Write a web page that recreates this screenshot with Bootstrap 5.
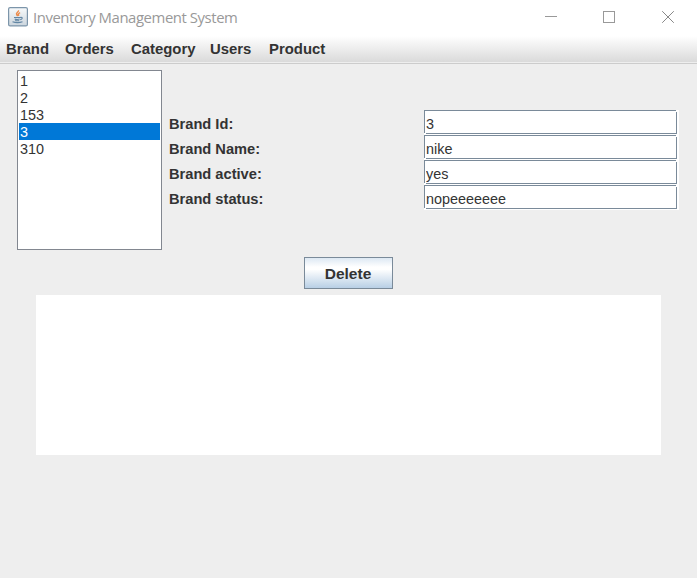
<!DOCTYPE html>
<html lang="en">
<head>
<meta charset="utf-8">
<meta name="viewport" content="width=device-width, initial-scale=1">
<title>Inventory Management System</title>
<link href="https://cdn.jsdelivr.net/npm/bootstrap@5.3.0/dist/css/bootstrap.min.css" rel="stylesheet">
<style>
body{background:#eee;color:#333;font:14.65px/17px "Liberation Sans",Arial,sans-serif;height:578px;overflow:hidden}
.titlebar{height:36px;padding:0 0 2px 8px;background:#fff;color:#999}
.app-title{font:14.9px/20px "Open Sans","Noto Sans",sans-serif;margin-left:5px;letter-spacing:-.43px;white-space:nowrap}
.window-tools{padding-right:23px;gap:47px}
.window-tools svg:first-child{margin-right:-1px}
.menubar{height:28px;padding:0 0 1px 6px;background:linear-gradient(#fff,#dadada 26px,#eee 26px,#eee 27px,#ccc 27px);font-weight:700}
.menubar .nav-link{color:#333;font-size:14.9px;font-weight:700;padding:0;white-space:nowrap}
.m1{width:59px}.m2{width:66px}.m3{width:79px}.m4{width:59px}
.editor{padding:6px 18px 0 17px}
.brand-list{width:145px;height:180px;border:1px solid #828790;background:#fff;padding:1px;font-size:14.4px}
.brand-list .list-group-item{border:0;padding:0 0 0 1px;height:17px;line-height:18px;color:#333;background:#fff}
.brand-list .list-group-item.active{background:#0078d7;color:#fff;margin:0}
.brand-form{margin:40px 0 0 7px}
.brand-form label{width:255px;height:25px;padding-top:6px;font-weight:700;line-height:17px}
.field-box{width:255px;height:25px;background:#fff;padding-right:2px;padding-bottom:1px}
.field-box .form-control{height:24px;min-height:0;border:0;border-radius:0;padding:5px 2px 1px;font-size:14.4px;line-height:18px;color:#333;box-shadow:none;
background:linear-gradient(#7a8a99,#7a8a99) 0 0/252px 1px no-repeat,linear-gradient(#7a8a99,#7a8a99) 0 0/1px 23px no-repeat,linear-gradient(#7a8a99,#7a8a99) 2px 23px/251px 1px no-repeat,linear-gradient(#7a8a99,#7a8a99) 252px 2px/1px 22px no-repeat,#fff}
.btn-delete{width:89px;height:32px;margin-top:7px;border:1px solid #7a8a99;border-radius:0;padding:0 1px 0 0;font-size:15.5px;line-height:17px;font-weight:700;color:#333;background:linear-gradient(#dde8f3,#fff 30%,#fff 38%,#b8cfe5)}
.output-panel{width:625px;height:160px;margin:6px 0 0 36px;background:#fff}
</style>
</head>
<body>
<header class="titlebar d-flex align-items-center">
<svg width="20" height="20" viewBox="0 0 20 20" fill="none">
<defs><linearGradient id="tile" x2="0" y2="1"><stop stop-color="#f8fafb"/><stop offset="1" stop-color="#cbd5dd"/></linearGradient></defs>
<rect x=".6" y=".6" width="18.8" height="18.3" rx="1.5" fill="url(#tile)" stroke="#7c95aa" stroke-width="1.2"/>
<path d="M10.4 3.3c.8 1.6-3 2.6-1.7 4.2l1 1.7M12.1 5.6c-2 1-2.2 1.8-1.1 3.2" stroke="#ec8b4b" stroke-width="1.5"/>
<path d="M6 10.5h6.5M6.7 12.1q2.6.8 5 0M7.2 13.5q2 .6 4 0M12.5 10.4c2.5-.3 2.2 1.8-.3 2.2M4.5 14.8q5 1.7 10 0" stroke="#6286a4" stroke-width="1.1"/>
</svg>
<span class="app-title">Inventory Management System</span>
<div class="window-tools d-flex ms-auto">
<svg width="12" height="12" fill="none" stroke="#999" shape-rendering="crispEdges"><path d="M0 5.5h12"/></svg>
<svg width="12" height="12" fill="none" stroke="#999" shape-rendering="crispEdges"><rect x=".5" y=".5" width="11" height="11"/></svg>
<svg width="12" height="12" fill="none" stroke="#888"><path d="M.2.2l11.6 11.6M11.8.2L.2 11.8"/></svg>
</div>
</header>
<nav class="menubar nav flex-nowrap align-items-center">
<a class="nav-link m1" href="#">Brand</a><a class="nav-link m2" href="#">Orders</a><a class="nav-link m3" href="#">Category</a><a class="nav-link m4" href="#">Users</a><a class="nav-link" href="#">Product</a>
</nav>
<main>
<div class="editor d-flex">
<ul class="brand-list list-group rounded-0 mb-0 flex-shrink-0">
<li class="list-group-item">1</li><li class="list-group-item">2</li><li class="list-group-item">153</li><li class="list-group-item active">3</li><li class="list-group-item">310</li>
</ul>
<form class="brand-form">
<div class="d-flex"><label for="id">Brand Id:</label><div class="field-box"><input class="form-control" id="id" value="3"></div></div>
<div class="d-flex"><label for="name">Brand Name:</label><div class="field-box"><input class="form-control" id="name" value="nike"></div></div>
<div class="d-flex"><label for="active">Brand active:</label><div class="field-box"><input class="form-control" id="active" value="yes"></div></div>
<div class="d-flex"><label for="status">Brand status:</label><div class="field-box"><input class="form-control" id="status" value="nopeeeeeee"></div></div>
</form>
</div>
<div class="d-flex justify-content-center"><button class="btn btn-delete" type="button">Delete</button></div>
<div class="output-panel"></div>
</main>
<script src="https://cdn.jsdelivr.net/npm/bootstrap@5.3.0/dist/js/bootstrap.bundle.min.js"></script>
</body>
</html>
